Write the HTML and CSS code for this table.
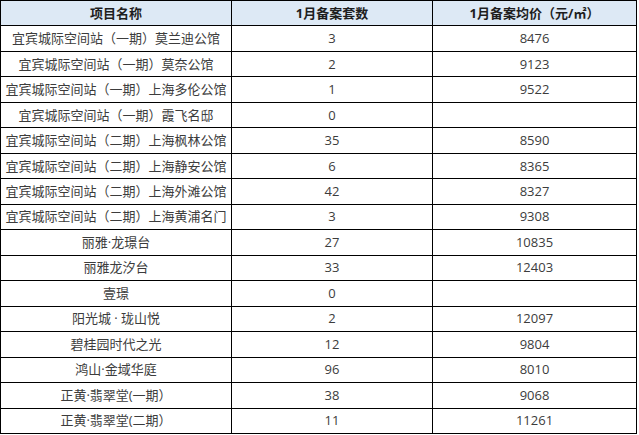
FILE: index.html
```html
<!DOCTYPE html>
<html lang="zh-CN">
<head>
<meta charset="utf-8">
<title>1月备案</title>
<link rel="stylesheet" href="styles.css">
</head>
<body>
<div class="table">
  <div class="cell head">项目名称</div><div class="cell head">1月备案套数</div><div class="cell head">1月备案均价（元/㎡）</div>
  <div class="cell">宜宾城际空间站（一期）莫兰迪公馆</div><div class="cell">3</div><div class="cell">8476</div>
  <div class="cell">宜宾城际空间站（一期）莫奈公馆</div><div class="cell">2</div><div class="cell">9123</div>
  <div class="cell">宜宾城际空间站（一期）上海多伦公馆</div><div class="cell">1</div><div class="cell">9522</div>
  <div class="cell">宜宾城际空间站（一期）霞飞名邸</div><div class="cell">0</div><div class="cell"></div>
  <div class="cell">宜宾城际空间站（二期）上海枫林公馆</div><div class="cell">35</div><div class="cell">8590</div>
  <div class="cell">宜宾城际空间站（二期）上海静安公馆</div><div class="cell">6</div><div class="cell">8365</div>
  <div class="cell">宜宾城际空间站（二期）上海外滩公馆</div><div class="cell">42</div><div class="cell">8327</div>
  <div class="cell">宜宾城际空间站（二期）上海黄浦名门</div><div class="cell">3</div><div class="cell">9308</div>
  <div class="cell">丽雅·龙璟台</div><div class="cell">27</div><div class="cell">10835</div>
  <div class="cell">丽雅龙汐台</div><div class="cell">33</div><div class="cell">12403</div>
  <div class="cell">壹璟</div><div class="cell">0</div><div class="cell"></div>
  <div class="cell">阳光城 · 珑山悦</div><div class="cell">2</div><div class="cell">12097</div>
  <div class="cell">碧桂园时代之光</div><div class="cell">12</div><div class="cell">9804</div>
  <div class="cell">鸿山·金域华庭</div><div class="cell">96</div><div class="cell">8010</div>
  <div class="cell">正黄·翡翠堂(一期）</div><div class="cell">38</div><div class="cell">9068</div>
  <div class="cell">正黄·翡翠堂(二期）</div><div class="cell">11</div><div class="cell">11261</div>
</div>
</body>
</html>
```

FILE: styles.css
```css
html, body {
  margin: 0;
  padding: 0;
  background: #ffffff;
}

.table {
  width: 637px;
  height: 434px;
  box-sizing: border-box;
  display: grid;
  grid-template-columns: 230px 200px 203px;
  grid-template-rows: repeat(17, 1fr);
  gap: 1px;
  padding: 1px;
  background: #000000;
  font-family: "Open Sans", "Noto Sans CJK SC", sans-serif;
  font-size: 13px;
  color: #3c3c3c;
}

.cell {
  background: #ffffff;
  display: flex;
  align-items: center;
  justify-content: center;
  white-space: nowrap;
  line-height: 1;
}

.head {
  background: #dde9f5;
  font-weight: bold;
  color: #1e1e1e;
}
```
